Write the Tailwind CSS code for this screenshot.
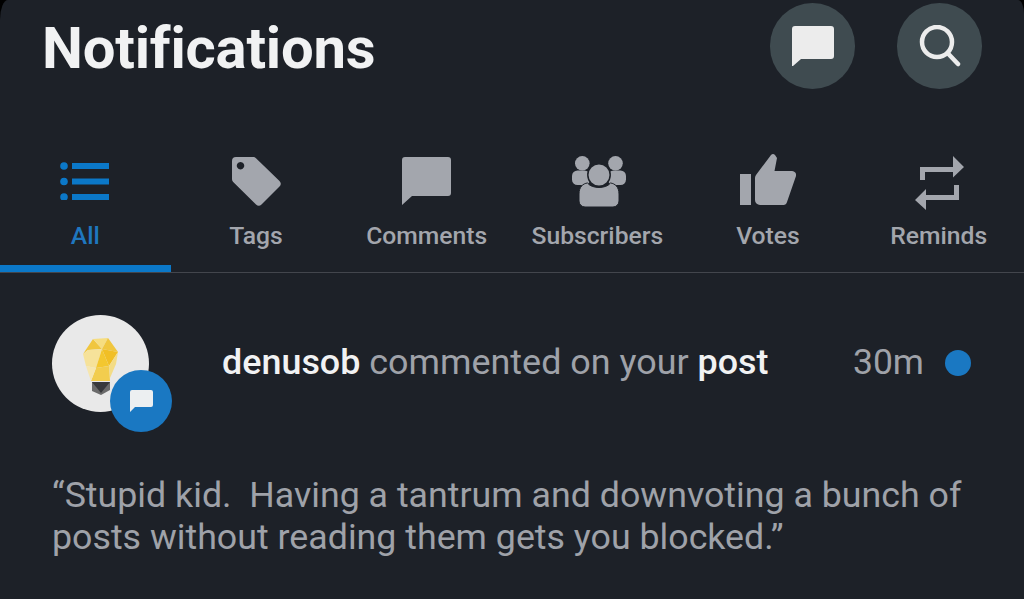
<!DOCTYPE html>
<html lang="en">
<head>
    <meta charset="UTF-8">
    <meta name="viewport" content="width=device-width, initial-scale=1.0">
    <title>Notifications</title>
    <script src="https://cdn.jsdelivr.net/npm/@tailwindcss/browser@4"></script>
</head>
<body class="bg-black overflow-hidden">
    <div class="w-[1024px] h-[599px] overflow-hidden rounded-tl-[8px_20px] rounded-tr-[6px_14px] bg-[#1d2128] font-['Roboto',sans-serif]">

        <!-- header -->
        <header class="flex items-start justify-between pl-[42px] pr-[42px] pt-[3px] h-[150px]">
            <h1 class="text-[58px] leading-[90px] font-bold tracking-[-0.2px] text-[#f1f2f3]">Notifications</h1>
            <div class="flex gap-[42px]">
                <button class="w-[85px] h-[86px] rounded-full bg-[#3f4b50] flex items-center justify-center">
                    <svg class="w-[42px] h-[40px]" viewBox="0 0 42 40" fill="#ececec"><path d="M3 0H39a3 3 0 0 1 3 3V30a3 3 0 0 1-3 3H9L1 40a.6.6 0 0 1-1-.5V3a3 3 0 0 1 3-3z"/></svg>
                </button>
                <button class="w-[85px] h-[86px] rounded-full bg-[#3f4b50] flex items-center justify-center">
                    <svg class="w-[42px] h-[42px]" viewBox="0 0 42 42" fill="none" stroke="#ececec" stroke-width="4.5" stroke-linecap="round"><circle cx="18" cy="17" r="15"/><path d="M29 28.500L39 39"/></svg>
                </button>
            </div>
        </header>

        <!-- tabs -->
        <nav class="grid grid-cols-6 h-[123px] border-b border-[#43464d] text-[24.700px] leading-[30px] font-medium text-[#a3a6ad]">
            <a class="flex flex-col items-center border-b-[7px] border-[#0b78c8] text-[#1f77bf]">
                <span class="h-[62px] flex items-center justify-center">
                    <svg class="w-[50px] h-[38px]" viewBox="0 0 50 38" fill="#0b78c8"><circle cx="4" cy="4" r="3.800"/><circle cx="4" cy="19.500" r="3.800"/><circle cx="4" cy="35" r="3.800"/><rect x="12" y="1" width="37" height="6"/><rect x="12" y="16.500" width="37" height="6"/><rect x="12" y="32" width="37" height="6"/></svg>
                </span>
                <span class="mt-[9px]">All</span>
            </a>
            <a class="flex flex-col items-center">
                <span class="h-[62px] flex items-center justify-center">
                    <svg class="w-[49px] h-[49px] translate-x-[1px]" viewBox="0 0 49 49" fill="#a3a6ad"><path fill-rule="evenodd" d="M4 0H21a4 4 0 0 1 3 1.200L47.500 24a4 4 0 0 1 0 5.500L29.500 47.500a4 4 0 0 1-5.500 0L1.200 25A4 4 0 0 1 0 22V4A4 4 0 0 1 4 0zM8.500 5a3.700 3.700 0 1 0 .01 0z"/></svg>
                </span>
                <span class="mt-[9px]">Tags</span>
            </a>
            <a class="flex flex-col items-center">
                <span class="h-[62px] flex items-center justify-center">
                    <svg class="w-[49px] h-[48px]" viewBox="0 0 49 48" fill="#a3a6ad"><path d="M3 0H46a3 3 0 0 1 3 3V36a3 3 0 0 1-3 3H10L0 48V3a3 3 0 0 1 3-3z"/></svg>
                </span>
                <span class="mt-[9px]">Comments</span>
            </a>
            <a class="flex flex-col items-center">
                <span class="h-[62px] flex items-center justify-center">
                    <svg class="w-[54px] h-[51px] translate-x-[2px]" viewBox="0 0 54 51" fill="#a3a6ad">
                        <circle cx="10.300" cy="7.300" r="7.300"/>
                        <circle cx="43.500" cy="7.300" r="7.300"/>
                        <rect x="0" y="14.500" width="18" height="14.500" rx="5.500"/>
                        <rect x="36" y="14.500" width="18" height="14.500" rx="5.500"/>
                        <circle cx="27" cy="19" r="11.200" stroke="#1d2128" stroke-width="1.500"/>
                        <path d="M7 38C7 31 11 27.500 15.500 27C20 33 34 33 38.500 27C43 27.500 47 31 47 38V45a6 6 0 0 1-6 6H13a6 6 0 0 1-6-6z" stroke="#1d2128" stroke-width="1"/>
                    </svg>
                </span>
                <span class="mt-[9px]">Subscribers</span>
            </a>
            <a class="flex flex-col items-center">
                <span class="h-[62px] flex items-center justify-center">
                    <svg class="w-[56px] h-[51px] -translate-y-[2px]" viewBox="0 0 56 51" fill="#a3a6ad"><rect x="0" y="20" width="11" height="31"/><path d="M16 21 L31 1 Q33 -1 35 1 L37 4 L34.500 17 H52 a4 4 0 0 1 4 5 L47 48 a4 4 0 0 1-4 3H20a5 5 0 0 1-5-5V24a5 5 0 0 1 1-3z"/></svg>
                </span>
                <span class="mt-[9px]">Votes</span>
            </a>
            <a class="flex flex-col items-center">
                <span class="h-[62px] flex items-center justify-center">
                    <svg class="w-[49px] h-[54px] translate-x-[1px] translate-y-[2px]" viewBox="0 0 49 54" fill="#a3a6ad"><path d="M5 11H38V0L49 11 38 21.500V16H10V24H5z"/><path d="M44 29V44H11V54L0 44 11 33V39H39V29z"/></svg>
                </span>
                <span class="mt-[9px]">Reminds</span>
            </a>
        </nav>

        <!-- notification row -->
        <section class="pl-[52px] pr-[53px] pt-[42px]">
            <div class="flex items-start">
                <div class="relative w-[97px] h-[97px] rounded-full bg-[#e9e9e9] flex items-center justify-center shrink-0">
                    <svg class="w-[36px] h-[58px] translate-y-[3px]" viewBox="0 0 36 58">
                        <path d="M10 1L19 11 5 12 0 16z" fill="#f0c63f"/>
                        <path d="M10 1L25 0 19 11z" fill="#f6dd80"/>
                        <path d="M25 0L35 14 19 11z" fill="#f0c63f"/>
                        <path d="M0 16L5 12 19 11 13 30 3 28z" fill="#f6e29a"/>
                        <path d="M19 11L35 14 26 28z" fill="#f1bf25"/>
                        <path d="M19 11L26 28 13 30z" fill="#f3c72f"/>
                        <path d="M35 14L33 26 27 40 26 28z" fill="#f3dc86"/>
                        <path d="M13 30L26 28 27 43H8z" fill="#f2cd4e"/>
                        <path d="M13 30L8 43 3 28z" fill="#f6e6ae"/>
                        <path d="M9 44H27V52L18 57 9 53z" fill="#6b6b6b"/>
                        <path d="M9 44H27L18 55z" fill="#38393c"/>
                    </svg>
                    <span class="absolute left-[58px] top-[55px] w-[62px] h-[62px] rounded-full bg-[#1a78c2] flex items-center justify-center">
                        <svg class="w-[23px] h-[22px]" viewBox="0 0 23 22" fill="#eceff1"><path d="M2 0H21a2 2 0 0 1 2 2V15a2 2 0 0 1-2 2H5L0 22V2a2 2 0 0 1 2-2z"/></svg>
                    </span>
                </div>
                <p class="ml-[73px] mt-[26px] flex-1 text-[35.900px] leading-[42px] text-[#9fa2a9]"><span class="font-medium text-[#f1f2f3]">denusob</span> commented on your <span class="font-medium text-[#f1f2f3]">post</span></p>
                <span class="mt-[26px] text-[35.500px] leading-[42px] text-[#9fa2a9]">30m</span>
                <span class="ml-[21px] mt-[35px] w-[26px] h-[26px] rounded-full bg-[#1a78c2]"></span>
            </div>
            <p class="mt-[62px] text-[35.750px] leading-[42px] text-[#9fa2a9]">“Stupid kid.&nbsp; Having a tantrum and downvoting a bunch of posts without reading them gets you blocked.”</p>
        </section>
    </div>
</body>
</html>
